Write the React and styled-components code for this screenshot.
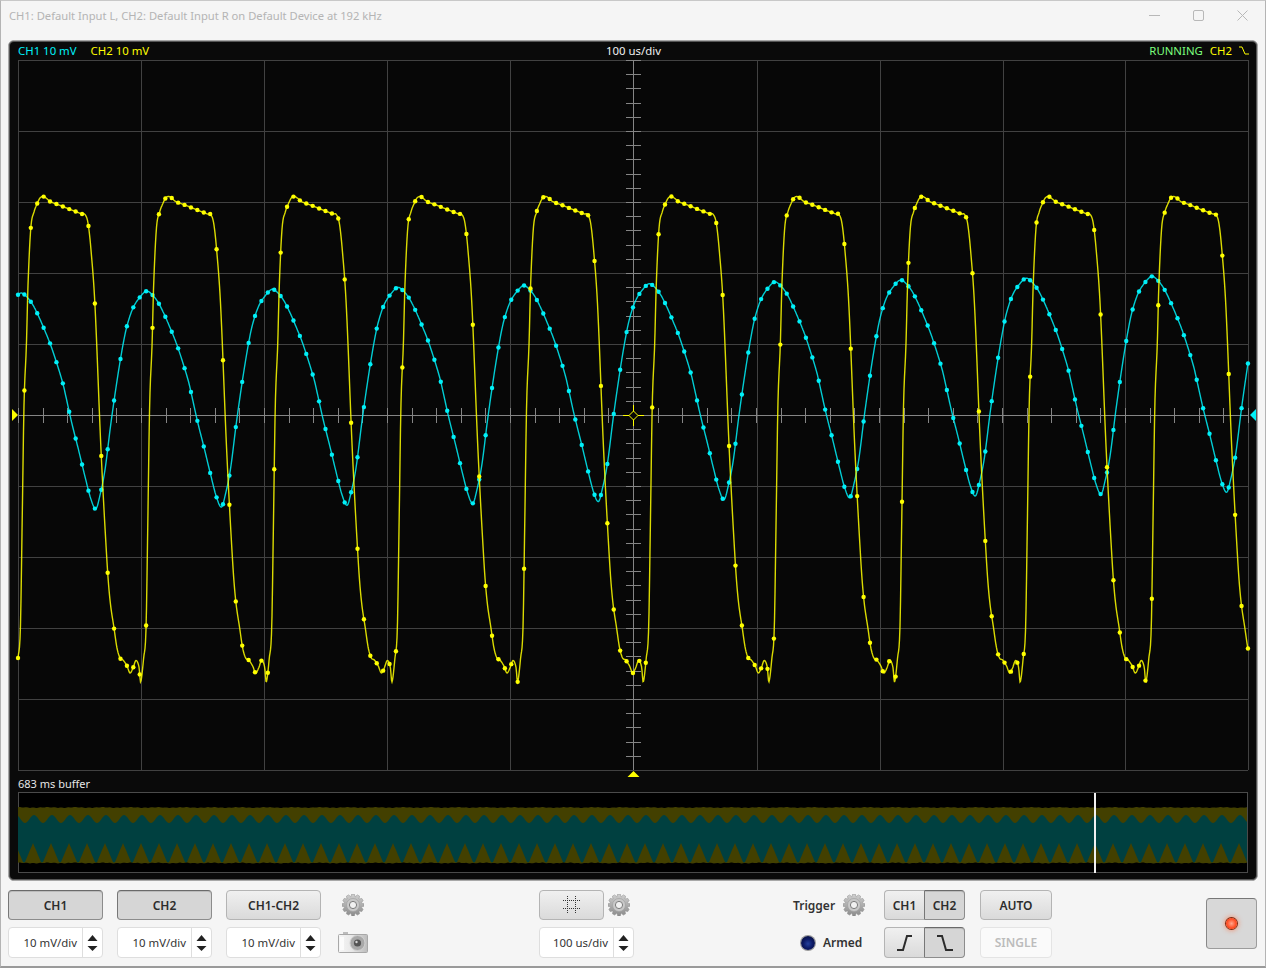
import styled, { createGlobalStyle, css } from "styled-components";

const GlobalStyle = createGlobalStyle`
    html, body { margin: 0; padding: 0; background: #f5f5f5; }
    body { font-family: "Noto Sans", "Open Sans", sans-serif; }
`;

const YELLOW = "#ffff00";
const CYAN = "#00f0f8";

// one period of each trace, in page pixels, read off the first cycle
const PERIOD = 125.65;
const YELLOW_KEYS = [
    [15, 682], [18, 658], [20.4, 628], [22.2, 520], [24, 405], [26.4, 345], [28, 285], [30.8, 228],
    [34, 212], [37, 204], [40, 198], [43, 196.5], [46, 198], [50, 201.5], [56.5, 204], [63, 206.5],
    [69, 209], [75.5, 211.5], [82, 214], [85, 214.5], [88, 223], [91, 250], [95, 306], [101, 450],
    [107, 562], [110, 600], [114, 628], [117, 648], [120, 658], [123, 660], [127, 666],
    [130, 673], [133, 668], [136, 660.5], [139, 667], [140.65, 682],
];
const CYAN_KEYS = [
    [0, 293], [6, 297], [12, 305], [18, 317], [24, 331], [30, 346], [36, 364], [42, 384],
    [45, 397], [51, 424], [58, 452], [64.5, 479], [70, 500], [75, 510], [79, 497], [84, 472],
    [90, 425], [96.5, 380], [102, 347], [106, 328], [112, 310], [119, 299], [125.65, 293],
].map(([d, y]) => [d + 20.85, y]);

const evalKeys = (keys, x) => {
    const x0 = keys[0][0];
    const px = x0 + (((x - x0) % PERIOD) + PERIOD) % PERIOD;
    let i = 0;
    while (i < keys.length - 2 && keys[i + 1][0] < px) i++;
    const n = keys.length - 1;
    const slope = (j) => {
        const a = j === 0 ? [keys[n - 1][0] - PERIOD, keys[n - 1][1]] : keys[j - 1];
        const b = j === n ? [keys[1][0] + PERIOD, keys[1][1]] : keys[j + 1];
        return (b[1] - a[1]) / (b[0] - a[0]);
    };
    const [xa, ya] = keys[i];
    const [xb, yb] = keys[i + 1];
    const h = xb - xa;
    const t = (px - xa) / h;
    const t2 = t * t;
    const t3 = t2 * t;
    return (2 * t3 - 3 * t2 + 1) * ya + (t3 - 2 * t2 + t) * h * slope(i)
        + (-2 * t3 + 3 * t2) * yb + (t3 - t2) * h * slope(i + 1);
};

const yellowAt = (x) => evalKeys(YELLOW_KEYS, x);
const cyanAt = (x) => evalKeys(CYAN_KEYS, x) - 1.85 * (x - 20.85) / PERIOD;

const xRange = [];
for (let x = 18; x <= 1248; x += 0.5) xRange.push(x);
const samples = [];
for (let x = 18; x <= 1248; x += 6.406) samples.push(x);

const tracePoints = (fn) => xRange.map((x) => `${x},${fn(x).toFixed(1)}`).join(" ");

const GRID_X = [18, 141, 264, 387, 510, 633, 757, 880, 1003, 1125, 1248];
const GRID_Y = [60, 131, 202, 273, 344, 415, 486, 557, 628, 699, 770];

const Window = styled.div`
    box-sizing: border-box;
    width: 1266px;
    height: 968px;
    overflow: hidden;
    display: flex;
    flex-direction: column;
    background: #f5f5f5;
    border: 1px solid #b4b4b4;
    border-top-color: #c8c8c8;
    border-bottom: 2px solid #9a9a9a;
`;

const TitleBar = styled.div`
    box-sizing: border-box;
    height: 31px;
    flex: none;
    display: flex;
    align-items: center;
    justify-content: space-between;
    padding: 0 17px 2px 8px;
`;

const TitleText = styled.span`
    font-size: 11.2px;
    color: #b4b4b4;
`;

const WindowButtons = styled.div`
    display: flex;
    gap: 33px;
    align-items: center;
`;

const Panel = styled.div`
    box-sizing: border-box;
    margin: 8px 7px 0;
    height: 841px;
    flex: none;
    display: flex;
    flex-direction: column;
    background: #0a0a0a;
    border: 1px solid #a8a8a8;
    box-shadow: inset 0 0 0 1px #555;
    border-radius: 6px;
    padding: 1px;
`;

const ScopeHeader = styled.div`
    box-sizing: border-box;
    height: 18px;
    flex: none;
    display: grid;
    grid-template-columns: 1fr auto 1fr;
    align-items: center;
    padding: 0 7px 2px 8px;
    font-size: 11.4px;
    color: #f0f0f0;
`;

const HeaderLeft = styled.div`
    display: flex;
    gap: 14px;
`;

const HeaderRight = styled.div`
    display: flex;
    gap: 7px;
    justify-content: flex-end;
    align-items: center;
`;

const Readout = styled.span`
    color: ${(p) => p.$color};
`;

const Plot = styled.svg`
    display: block;
    flex: none;
`;

const BufferCaption = styled.div`
    height: 14px;
    flex: none;
    padding-left: 8px;
    font-size: 11px;
    line-height: 11px;
    color: #e6e6e6;
`;

const Controls = styled.div`
    flex: 1;
    display: flex;
    padding: 9px 0 0 7px;
`;

const Column = styled.div`
    width: ${(p) => p.$width}px;
    margin-left: ${(p) => p.$offset || 0}px;
    height: 68px;
    flex: none;
    display: grid;
    grid-template-rows: 30px 31px;
    row-gap: 7px;
`;

const Row = styled.div`
    display: flex;
    align-items: center;
    gap: ${(p) => p.$gap || 0}px;
    justify-content: ${(p) => p.$justify || "flex-start"};
`;

const buttonLook = css`
    box-sizing: border-box;
    height: 100%;
    padding: 0;
    display: flex;
    align-items: center;
    justify-content: center;
    font-family: inherit;
    font-size: 12px;
    font-weight: 600;
    color: #2c2c2c;
    border: 1px solid #b4b4b4;
    border-radius: 4px;
    background: linear-gradient(#f0f0f0, #dadada);
`;

const activeLook = css`
    border-color: #8c8c8c;
    border-top-color: #6a6a6a;
    border-left-color: #777;
    background: #d6d6d6;
    box-shadow: inset 0 1px 0 #bbb;
`;

const Button = styled.button`
    ${buttonLook}
    width: ${(p) => (p.$width ? `${p.$width}px` : "100%")};
    ${(p) => p.$active && activeLook}
    ${(p) => p.disabled && css`
        background: #fafafa;
        border-color: #e4e4e4;
        color: #bcbcbc;
    `}
`;

const Segment = styled.div`
    display: flex;
    width: 100%;
    height: 100%;
`;

const SegmentButton = styled.button`
    ${buttonLook}
    flex: 1;
    ${(p) => p.$active && activeLook}
    border-radius: ${(p) => (p.$first ? "4px 0 0 4px" : "0 4px 4px 0")};
    ${(p) => p.$first && "border-right: none;"}
`;

const Spin = styled.div`
    box-sizing: border-box;
    width: 100%;
    height: 100%;
    display: flex;
    background: #fff;
    border: 1px solid #dedede;
    border-radius: 4px;
`;

const SpinValue = styled.div`
    flex: 1;
    display: flex;
    align-items: center;
    justify-content: flex-end;
    padding-right: 5px;
    font-size: 11.4px;
    color: #333;
`;

const SpinArrows = styled.div`
    width: 19px;
    flex: none;
    border-left: 1px solid #dedede;
    display: flex;
    align-items: center;
    justify-content: center;
`;

const Label = styled.span`
    font-size: 12px;
    font-weight: 600;
    color: #333;
`;

const ArmedLed = styled.span`
    width: 14px;
    height: 14px;
    margin-left: 8px;
    border-radius: 50%;
    background: radial-gradient(circle at 50% 55%, #24409c 0, #0c1a66 45%, #070b26 100%);
    box-shadow: 0 0 0 1px #999;
`;

const PowerButton = styled.button`
    box-sizing: border-box;
    width: 51px;
    height: 51px;
    margin: 8px 0 0 154px;
    flex: none;
    padding: 0;
    display: flex;
    align-items: center;
    justify-content: center;
    background: #d8d8d8;
    border: 1px solid #9c9c9c;
    border-top-color: #777;
    border-left-color: #888;
    border-radius: 4px;
`;

const PowerLed = styled.span`
    width: 11px;
    height: 11px;
    border-radius: 50%;
    background: radial-gradient(circle, #ffa58c 0, #ff4a20 60%, #d8360f 100%);
    box-shadow: 0 0 0 1px #7c2a12, 0 0 4px 2px rgba(255, 110, 60, 0.5);
`;

const gearPoints = () => {
    const pts = [];
    const teeth = 12;
    for (let i = 0; i < teeth; i++) {
        const a = (i / teeth) * Math.PI * 2;
        const w = Math.PI / teeth;
        [[8.6, -w * 0.95], [11, -w * 0.45], [11, w * 0.45], [8.6, w * 0.95]].forEach(([r, o]) => {
            pts.push(`${(11 + r * Math.cos(a + o)).toFixed(2)},${(11 + r * Math.sin(a + o)).toFixed(2)}`);
        });
    }
    return pts.join(" ");
};

const Gear = () => (
    <svg width="22" height="22" viewBox="0 0 22 22">
        <defs>
            <linearGradient id="gearFill" x1="0" y1="0" x2="0" y2="1">
                <stop offset="0" stopColor="#d0d0d0" />
                <stop offset="1" stopColor="#8c8c8c" />
            </linearGradient>
        </defs>
        <polygon points={gearPoints()} fill="url(#gearFill)" stroke="#8a8a8a" strokeWidth="0.5" />
        <circle cx="11" cy="11" r="6.5" fill="#c9c9c9" stroke="#a0a0a0" strokeWidth="0.7" />
        <circle cx="11" cy="11" r="3.6" fill="#f1f1f1" stroke="#7c7c7c" strokeWidth="1" />
    </svg>
);

const Camera = () => (
    <svg width="30" height="21" viewBox="0 0 30 21">
        <defs>
            <linearGradient id="camBody" x1="0" y1="0" x2="1" y2="0">
                <stop offset="0" stopColor="#f6f6f6" />
                <stop offset="0.45" stopColor="#e8e8e8" />
                <stop offset="1" stopColor="#bcbcbc" />
            </linearGradient>
        </defs>
        <rect x="5" y="0" width="5" height="3" fill="#bcbcbc" />
        <rect x="0.5" y="2.5" width="29" height="18" rx="1" fill="url(#camBody)" stroke="#a8a8a8" />
        <rect x="2" y="5" width="4" height="13" fill="#fbfbfb" />
        <circle cx="19.5" cy="11" r="7.5" fill="#a8a8a8" stroke="#d0d0d0" />
        <circle cx="19.5" cy="11" r="3.6" fill="#555" />
        <circle cx="18.5" cy="10" r="1.2" fill="#d5d5d5" />
    </svg>
);

const GridIcon = () => (
    <svg width="18" height="18" viewBox="0 0 18 18" stroke="#333" strokeWidth="1" strokeDasharray="1 1">
        <path d="M4.5 0V18M12.5 0V18M0 4.5H18M0 12.5H18" fill="none" />
    </svg>
);

const SpinGlyph = () => (
    <svg width="11" height="18" viewBox="0 0 11 18" fill="#222">
        <path d="M5.5 1L10.5 7H0.5Z" />
        <path d="M0.5 12H10.5L5.5 17Z" />
    </svg>
);

const SlopeIcon = ({ falling }) => (
    <svg width="16" height="16" viewBox="0 0 16 16" fill="none" stroke="#2c2c2c" strokeWidth="2">
        <path d={falling ? "M0 1H5L9 15H16" : "M0 15H6L10 1H15"} />
    </svg>
);

const WinMin = () => (
    <svg width="11" height="11" viewBox="0 0 11 11" stroke="#b8b8b8" fill="none"><path d="M0 5.5H11" /></svg>
);
const WinMax = () => (
    <svg width="11" height="11" viewBox="0 0 11 11" stroke="#b8b8b8" fill="none"><rect x="0.5" y="0.5" width="10" height="10" rx="1.5" /></svg>
);
const WinClose = () => (
    <svg width="11" height="11" viewBox="0 0 11 11" stroke="#b8b8b8" fill="none"><path d="M0.5 0.5L10.5 10.5M10.5 0.5L0.5 10.5" /></svg>
);

const Trace = ({ fn, color }) => (
    <g>
        <polyline points={tracePoints(fn)} fill="none" stroke={color} strokeOpacity="0.85" strokeWidth="1.4" />
        {samples.map((x) => (
            <circle key={x} cx={x} cy={fn(x)} r="2.2" fill={color} />
        ))}
    </g>
);

const ScopeGrid = () => {
    const hTicks = [];
    for (let x = 18; x <= 1248; x += 24.6) hTicks.push(x);
    const vTicks = [];
    for (let y = 60; y <= 770; y += 14.2) vTicks.push(y);
    return (
        <g>
            {GRID_X.map((x) => <line key={x} x1={x + 0.5} x2={x + 0.5} y1="60" y2="770" stroke="#414141" />)}
            {GRID_Y.map((y) => <line key={y} x1="18" x2="1248" y1={y + 0.5} y2={y + 0.5} stroke="#414141" />)}
            <line x1="18" x2="1248" y1="415.5" y2="415.5" stroke="#858585" />
            <line x1="633.5" x2="633.5" y1="60" y2="770" stroke="#858585" />
            {hTicks.map((x) => <line key={x} x1={Math.round(x) + 0.5} x2={Math.round(x) + 0.5} y1="408" y2="423" stroke="#858585" />)}
            {vTicks.map((y) => <line key={y} x1="626" x2="641" y1={Math.round(y) + 0.5} y2={Math.round(y) + 0.5} stroke="#858585" />)}
        </g>
    );
};

const ScopePlot = () => (
    <Plot width="1246" height="718" viewBox="10 60 1246 718">
        <rect x="18" y="60" width="1230" height="710" fill="#070707" />
        <ScopeGrid />
        <Trace fn={cyanAt} color={CYAN} />
        <Trace fn={yellowAt} color={YELLOW} />
        <path d="M623 415.5H644M633.5 405V426" stroke={YELLOW} strokeWidth="1" />
        <path d="M633.5 411L638 415.5L633.5 420L629 415.5Z" fill="#070707" stroke={YELLOW} />
        <path d="M12 409L18 415L12 421Z" fill={YELLOW} />
        <path d="M1256 409L1250 415L1256 421Z" fill={CYAN} />
        <path d="M627.5 777L633.5 771L639.5 777Z" fill={YELLOW} />
    </Plot>
);

const bufferPaths = () => {
    const top = [];
    const bottom = [];
    const teal = [];
    const tealBottom = [];
    for (let x = 18; x <= 1247; x += 1) {
        const wobble = Math.sin(x * 0.9) * 0.25 + Math.sin(x * 0.23) * 0.25;
        top.push(`${x},${(807.5 + wobble).toFixed(1)}`);
        bottom.push(`${x},${(863 + wobble).toFixed(1)}`);
        const a = ((x - 25) / 18) * Math.PI * 2;
        teal.push(`${x},${(819 + 4 * Math.cos(a)).toFixed(1)}`);
        // the yellow spikes are sharp at the top and wide apart at the foot
        const ph = (((x - 33) % 18) + 18) % 18;
        const d = Math.min(ph, 18 - ph) / 9;
        tealBottom.push(`${x},${(843 + 19.5 * Math.min(1, d * 1.1)).toFixed(1)}`);
    }
    return {
        yellow: [...top, ...bottom.reverse()].join(" "),
        teal: [...teal, ...tealBottom.reverse()].join(" "),
    };
};

const BufferPlot = () => {
    const { yellow, teal } = bufferPaths();
    return (
        <Plot width="1246" height="82" viewBox="10 792 1246 82">
            <rect x="18.5" y="792.5" width="1229" height="80" fill="#000" stroke="#4a4a4a" />
            <polygon points={yellow} fill="#434000" />
            <polygon points={teal} fill="#004040" />
            <rect x="1094" y="793" width="2" height="80" fill="#f0f0f0" />
        </Plot>
    );
};

const ChannelControl = ({ name, active, offset }) => (
    <Column $width={95} $offset={offset}>
        <Button $active={active}>{name}</Button>
        <Spin>
            <SpinValue>10 mV/div</SpinValue>
            <SpinArrows><SpinGlyph /></SpinArrows>
        </Spin>
    </Column>
);

const App = () => {
    return (
        <Window>
            <GlobalStyle />
            <TitleBar>
                <TitleText>CH1: Default Input L, CH2: Default Input R on Default Device at 192 kHz</TitleText>
                <WindowButtons>
                    <WinMin />
                    <WinMax />
                    <WinClose />
                </WindowButtons>
            </TitleBar>
            <Panel>
                <ScopeHeader>
                    <HeaderLeft>
                        <Readout $color={CYAN}>CH1 10 mV</Readout>
                        <Readout $color={YELLOW}>CH2 10 mV</Readout>
                    </HeaderLeft>
                    <span>100 us/div</span>
                    <HeaderRight>
                        <Readout $color="#7dff7d">RUNNING</Readout>
                        <Readout $color={YELLOW}>CH2</Readout>
                        <svg width="10" height="9" viewBox="0 0 10 9" fill="none" stroke={YELLOW}>
                            <path d="M0 1H3L6 8H10" />
                        </svg>
                    </HeaderRight>
                </ScopeHeader>
                <ScopePlot />
                <BufferCaption>683 ms buffer</BufferCaption>
                <BufferPlot />
            </Panel>
            <Controls>
                <ChannelControl name="CH1" active />
                <ChannelControl name="CH2" active offset={14} />
                <ChannelControl name="CH1-CH2" offset={14} />
                <Column $width={30} $offset={17}>
                    <Row $justify="center"><Gear /></Row>
                    <Row $justify="center"><Camera /></Row>
                </Column>
                <Column $width={95} $offset={171}>
                    <Row $gap={4}>
                        <Button $width={65}><GridIcon /></Button>
                        <Gear />
                    </Row>
                    <Spin>
                        <SpinValue>100 us/div</SpinValue>
                        <SpinArrows><SpinGlyph /></SpinArrows>
                    </Spin>
                </Column>
                <Column $width={71} $offset={159}>
                    <Row $gap={8}>
                        <Label>Trigger</Label>
                        <Gear />
                    </Row>
                    <Row $gap={8}>
                        <ArmedLed />
                        <Label>Armed</Label>
                    </Row>
                </Column>
                <Column $width={81} $offset={20}>
                    <Segment>
                        <SegmentButton $first>CH1</SegmentButton>
                        <SegmentButton $active>CH2</SegmentButton>
                    </Segment>
                    <Segment>
                        <SegmentButton $first><SlopeIcon /></SegmentButton>
                        <SegmentButton $active><SlopeIcon falling /></SegmentButton>
                    </Segment>
                </Column>
                <Column $width={72} $offset={15}>
                    <Button>AUTO</Button>
                    <Button disabled>SINGLE</Button>
                </Column>
                <PowerButton><PowerLed /></PowerButton>
            </Controls>
        </Window>
    );
};

export default App;
